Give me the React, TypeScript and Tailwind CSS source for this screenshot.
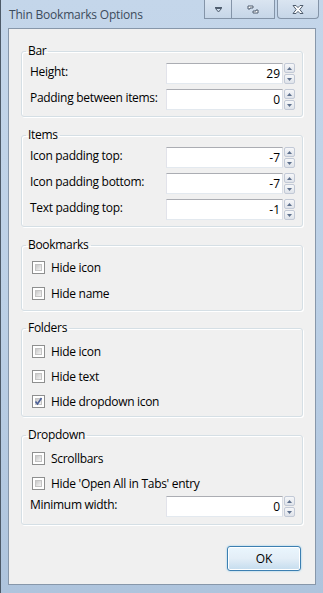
import React from 'react';

const FONT = {fontFamily: '"Segoe UI", "Open Sans", "Noto Sans", sans-serif'};

function Spin({value}: {value: string}) {
  return (
    <div className="flex h-[21px] w-[129px] items-stretch">
      <div className="flex flex-1 items-center justify-end border border-[#abadb3] border-b-[#e3e9ef] border-l-[#e2e3ea] border-r-[#dbdfe6] bg-white pr-[2px] text-[12px] text-black">
        {value}
      </div>
      <div className="ml-[1px] flex w-[11px] flex-col gap-[1px]">
        {['up', 'down'].map((dir) => (
          <div
            key={dir}
            className="flex flex-1 items-center justify-center rounded-[2px] border border-[#c2c9d6] bg-gradient-to-b from-[#f6f7f9] to-[#dfe3ea]"
          >
            <svg width="5" height="3" viewBox="0 0 5 3">
              {dir === 'up' ? <path d="M0 3 L2.5 0 L5 3 Z" fill="#5d6f8c" /> : <path d="M0 0 L2.5 3 L5 0 Z" fill="#5d6f8c" />}
            </svg>
          </div>
        ))}
      </div>
    </div>
  );
}

function SpinRow({label, value}: {label: string; value: string}) {
  return (
    <div className="flex items-center justify-between pl-[8px] pr-[7px]">
      <span className="-mt-[4px] text-[12px] tracking-[-0.3px] text-black">{label}</span>
      <Spin value={value} />
    </div>
  );
}

function Check({label, checked}: {label: string; checked?: boolean}) {
  return (
    <div className="flex h-[17px] items-center gap-[6px] pl-[10px]">
      <div className="flex h-[13px] w-[13px] items-center justify-center border border-[#8e8f8f] bg-white p-[2px]">
        <div className="relative flex h-full w-full items-center justify-center border border-[#c4c4c4] bg-gradient-to-br from-[#c8c8c8] to-[#f4f4f4]">
          {checked && (
            <svg width="9" height="9" viewBox="0 0 9 9" className="absolute">
              <path d="M1.5 4.5 L3.5 7 L7.5 1" fill="none" stroke="#4a5f97" strokeWidth="1.6" />
            </svg>
          )}
        </div>
      </div>
      <span className="text-[12px] tracking-[-0.3px] text-black">{label}</span>
    </div>
  );
}

function Group({title, className, children}: {title: string; className?: string; children: React.ReactNode}) {
  return (
    <fieldset
      className={`rounded-[3px] border border-[#d5dfe5] shadow-[inset_1px_1px_0_#ffffff,1px_1px_0_#ffffff] ${className ?? ''}`}
    >
      <legend className="ml-[4px] px-[2px] text-[12px] leading-[16px] tracking-[-0.3px] text-black">{title}</legend>
      {children}
    </fieldset>
  );
}

export default function App() {
  return (
    <div
      className="flex h-[593px] w-[323px] flex-col overflow-hidden border-l border-[#4d5a68] bg-gradient-to-b from-[#c4d6ea] via-[#bcd0e6] to-[#aec4dd]"
      style={FONT}
    >
      {/* title bar */}
      <div className="flex h-[28px] items-start">
        <span className="ml-[8px] mt-[6px] text-[12px] tracking-[-0.2px] text-[#3c4b5c]">Thin Bookmarks Options</span>
        <div className="ml-auto mr-[4px] flex">
          <div className="flex h-[19px] w-[28px] items-center justify-center border border-t-0 border-[#8494a8] bg-gradient-to-b from-[#e3ebf4]/70 to-[#c8d6e6]/60">
            <svg width="9" height="7" viewBox="0 0 9 7">
              <path d="M1 1.5 H8 M1.5 2.5 L4.5 6 L7.5 2.5 Z" fill="none" stroke="#4f5d6e" strokeWidth="1" />
            </svg>
          </div>
          <div className="flex h-[19px] w-[43px] items-center justify-center border border-l-0 border-t-0 border-[#8494a8] bg-gradient-to-b from-[#e3ebf4]/70 to-[#c8d6e6]/60">
            <svg width="12" height="9" viewBox="0 0 12 9">
              <path d="M1 1 H6 V3 H3 V4 H1 Z M11 8 H6 V6 H9 V5 H11 Z" fill="#ffffff" stroke="#4f5d6e" strokeWidth="1" />
            </svg>
          </div>
          <div className="ml-[2px] flex h-[19px] w-[42px] items-center justify-center rounded-b-[4px] border border-t-0 border-[#8494a8] bg-gradient-to-b from-[#e3ebf4]/70 to-[#c8d6e6]/60">
            <svg width="12" height="9" viewBox="0 0 12 9">
              <path d="M1 0.5 H4 L6 2.6 L8 0.5 H11 L7.8 4.5 L11 8.5 H8 L6 6.4 L4 8.5 H1 L4.2 4.5 Z" fill="#ffffff" stroke="#4f5d6e" strokeWidth="1" strokeLinejoin="round" />
            </svg>
          </div>
        </div>
      </div>

      {/* client area */}
      <div className="mx-[7px] flex h-[557px] flex-col border border-[#8797aa] bg-[#f0f0f0] px-[12px] pt-[14px]">
        <Group title="Bar" className="pb-[6px]">
          <div className="mt-[4px] flex flex-col gap-[5px]">
            <SpinRow label="Height:" value="29" />
            <SpinRow label="Padding between items:" value="0" />
          </div>
        </Group>

        <Group title="Items" className="mt-[10px] pb-[6px]">
          <div className="mt-[4px] flex flex-col gap-[5px]">
            <SpinRow label="Icon padding top:" value="-7" />
            <SpinRow label="Icon padding bottom:" value="-7" />
            <SpinRow label="Text padding top:" value="-1" />
          </div>
        </Group>

        <Group title="Bookmarks" className="mt-[10px] pb-[8px]">
          <div className="mt-[6px] flex flex-col gap-[9px]">
            <Check label="Hide icon" />
            <Check label="Hide name" />
          </div>
        </Group>

        <Group title="Folders" className="mt-[9px] pb-[6px]">
          <div className="mt-[7px] flex flex-col gap-[8px]">
            <Check label="Hide icon" />
            <Check label="Hide text" />
            <Check label="Hide dropdown icon" checked />
          </div>
        </Group>

        <Group title="Dropdown" className="mt-[10px] pb-[7px]">
          <div className="mt-[7px] flex flex-col gap-[8px]">
            <Check label="Scrollbars" />
            <Check label="Hide 'Open All in Tabs' entry" />
          </div>
          <div className="mt-[4px]">
            <SpinRow label="Minimum width:" value="0" />
          </div>
        </Group>

        <div className="mt-[21px] flex justify-end pr-[2px]">
          <button className="h-[25px] w-[74px] rounded-[3px] border border-[#3c7fb1] bg-gradient-to-b from-[#eaf6fd] via-[#e3eef7] to-[#c4dcee] text-[12px] text-black shadow-[inset_0_0_0_1px_#ffffff,0_0_2px_#7fc4ec]">
            OK
          </button>
        </div>
      </div>
    </div>
  );
}
